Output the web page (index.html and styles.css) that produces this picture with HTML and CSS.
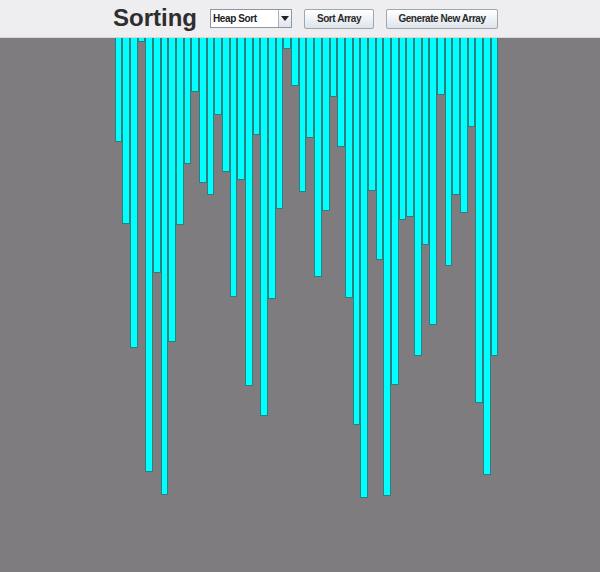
FILE: index.html
```html
<!DOCTYPE html>
<html>
<head>
<meta charset="utf-8">
<link rel="stylesheet" href="styles.css">
</head>
<body>
<div class="app">
  <header class="toolbar">
    <h1 class="title">Sorting</h1>
    <div class="combo">
      <span class="combo-text">Heap Sort</span>
      <span class="combo-arrow"><svg width="8" height="5" viewBox="0 0 8 5"><path d="M0 0 H8 L4 5 Z" fill="#222"/></svg></span>
    </div>
    <button class="btn btn-sort">Sort Array</button>
    <button class="btn btn-gen">Generate New Array</button>
  </header>
  <main class="canvas">
    <div class="bars">
      <div class="bar" style="height:104px"></div>
      <div class="bar" style="height:186px"></div>
      <div class="bar" style="height:310px"></div>
      <div class="bar" style="height:4px"></div>
      <div class="bar" style="height:434px"></div>
      <div class="bar" style="height:235px"></div>
      <div class="bar" style="height:457px"></div>
      <div class="bar" style="height:304px"></div>
      <div class="bar" style="height:187px"></div>
      <div class="bar" style="height:126px"></div>
      <div class="bar" style="height:54px"></div>
      <div class="bar" style="height:145px"></div>
      <div class="bar" style="height:157px"></div>
      <div class="bar" style="height:77px"></div>
      <div class="bar" style="height:134px"></div>
      <div class="bar" style="height:259px"></div>
      <div class="bar" style="height:142px"></div>
      <div class="bar" style="height:348px"></div>
      <div class="bar" style="height:97px"></div>
      <div class="bar" style="height:378px"></div>
      <div class="bar" style="height:261px"></div>
      <div class="bar" style="height:171px"></div>
      <div class="bar" style="height:11px"></div>
      <div class="bar" style="height:48px"></div>
      <div class="bar" style="height:154px"></div>
      <div class="bar" style="height:100px"></div>
      <div class="bar" style="height:239px"></div>
      <div class="bar" style="height:173px"></div>
      <div class="bar" style="height:59px"></div>
      <div class="bar" style="height:109px"></div>
      <div class="bar" style="height:260px"></div>
      <div class="bar" style="height:387px"></div>
      <div class="bar" style="height:460px"></div>
      <div class="bar" style="height:153px"></div>
      <div class="bar" style="height:222px"></div>
      <div class="bar" style="height:458px"></div>
      <div class="bar" style="height:347px"></div>
      <div class="bar" style="height:182px"></div>
      <div class="bar" style="height:179px"></div>
      <div class="bar" style="height:318px"></div>
      <div class="bar" style="height:207px"></div>
      <div class="bar" style="height:287px"></div>
      <div class="bar" style="height:57px"></div>
      <div class="bar" style="height:228px"></div>
      <div class="bar" style="height:157px"></div>
      <div class="bar" style="height:175px"></div>
      <div class="bar" style="height:89px"></div>
      <div class="bar" style="height:365px"></div>
      <div class="bar" style="height:437px"></div>
      <div class="bar" style="height:318px"></div>
    </div>
  </main>
</div>
</body>
</html>
```

FILE: styles.css
```css
html, body {
  margin: 0;
  padding: 0;
  width: 600px;
  height: 572px;
  overflow: hidden;
}

.app {
  display: flex;
  flex-direction: column;
  height: 572px;
  font-family: "Liberation Sans", Arial, sans-serif;
}

.toolbar {
  height: 38px;
  flex: 0 0 38px;
  box-sizing: border-box;
  background: #eeedef;
  border-bottom: 1px solid #d6d5d8;
  display: flex;
  align-items: center;
  padding-left: 113px;
}

.title {
  margin: 0 13px 0 0;
  font-size: 24px;
  font-weight: bold;
  color: #2e2e2e;
  line-height: 24px;
  position: relative;
  top: -1px;
}

.combo {
  width: 82px;
  height: 19px;
  box-sizing: border-box;
  border: 1px solid #8d96a2;
  background: #ffffff;
  display: flex;
  align-items: stretch;
  margin-right: 12px;
}

.combo-text {
  flex: 1;
  font-size: 10px;
  font-weight: bold;
  letter-spacing: -0.4px;
  color: #222;
  padding-left: 2px;
  line-height: 17px;
}

.combo-arrow {
  width: 12px;
  border-left: 1px solid #a8b0ba;
  background: linear-gradient(#ffffff, #dfe5ec);
  display: flex;
  align-items: center;
  justify-content: center;
}

.btn {
  height: 20px;
  box-sizing: border-box;
  border: 1px solid #9ea6b0;
  border-radius: 2px;
  background: linear-gradient(#ffffff 0%, #f2f5f8 40%, #dde3ea 100%);
  font-family: "Liberation Sans", Arial, sans-serif;
  font-size: 10px;
  font-weight: bold;
  letter-spacing: -0.45px;
  color: #2a2a2a;
  padding: 0;
  margin: 0;
}

.btn-sort {
  width: 70px;
  margin-right: 12px;
}

.btn-gen {
  width: 112px;
}

.canvas {
  flex: 1;
  background: #7e7c7f;
}

.bars {
  display: flex;
  align-items: flex-start;
  margin-left: 114.7px;
  width: 383.3px;
}

.bar {
  flex: 1 1 0;
  box-sizing: border-box;
  background: #00ffff;
  border: 1px solid #2b7f7c;
  border-top: none;
}
```
